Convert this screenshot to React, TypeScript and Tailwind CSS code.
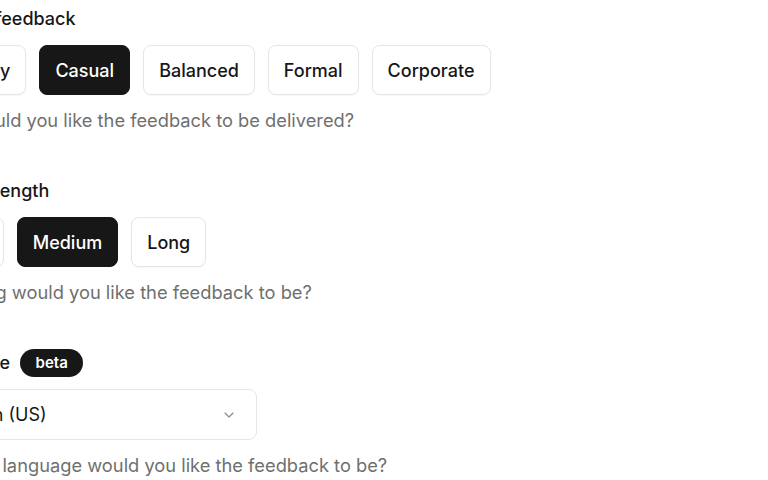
import React from "react";
import { ChevronDown } from "lucide-react";

function Option({ label, active }: { label: string; active?: boolean }) {
  return (
    <button
      className={
        active
          ? "h-[50px] rounded-lg border border-[#171717] bg-[#171717] px-[15px] text-[18px] font-medium text-white"
          : "h-[50px] rounded-lg border border-[#e6e6e6] bg-white px-[15px] text-[18px] font-medium text-[#171717] shadow-[0_1px_2px_rgba(0,0,0,0.04)]"
      }
    >
      {label}
    </button>
  );
}

export default function App() {
  return (
    <div
      className="min-h-[480px] w-[768px] overflow-hidden bg-white"
      style={{ fontFamily: "Inter, 'Noto Sans', sans-serif" }}
    >
      <div className="-ml-[75px] pt-[5px]">
        <section>
          <div className="text-[18px] font-medium leading-[28px] text-[#171717]">Tone of feedback</div>
          <div className="mt-3 flex gap-[13px]">
            <Option label="Friendly" />
            <Option label="Casual" active />
            <Option label="Balanced" />
            <Option label="Formal" />
            <Option label="Corporate" />
          </div>
          <p className="mt-[11px] text-[18.3px] leading-[28px] text-[#6f6f6f]">
            How would you like the feedback to be delivered?
          </p>
        </section>
        <section className="mt-[43px]">
          <div className="text-[18px] font-medium leading-[28px] text-[#171717]">Answer length</div>
          <div className="mt-3 flex gap-[13px]">
            <Option label="Short" />
            <Option label="Medium" active />
            <Option label="Long" />
          </div>
          <p className="mt-[11px] text-[18.3px] leading-[28px] text-[#6f6f6f]">
            How long would you like the feedback to be?
          </p>
        </section>
        <section className="mt-[43px]">
          <div className="flex h-[28px] items-center gap-[10px]">
            <span className="text-[18px] font-medium leading-[28px] text-[#171717]">Language</span>
            <span className="flex h-[28px] w-[63px] items-center justify-center rounded-full bg-[#171717] text-[15px] font-semibold text-white">
              beta
            </span>
          </div>
          <div className="mt-3 flex h-[51px] w-[332px] items-center justify-between rounded-lg border border-[#e6e6e6] bg-white pl-4 pr-[19px] text-[18px] text-[#171717]">
            <span>English (US)</span>
            <ChevronDown size={16} strokeWidth={1.75} className="text-[#8a8a8a]" />
          </div>
          <p className="mt-[11px] text-[18.3px] leading-[28px] text-[#6f6f6f]">
            In which language would you like the feedback to be?
          </p>
        </section>
      </div>
    </div>
  );
}
